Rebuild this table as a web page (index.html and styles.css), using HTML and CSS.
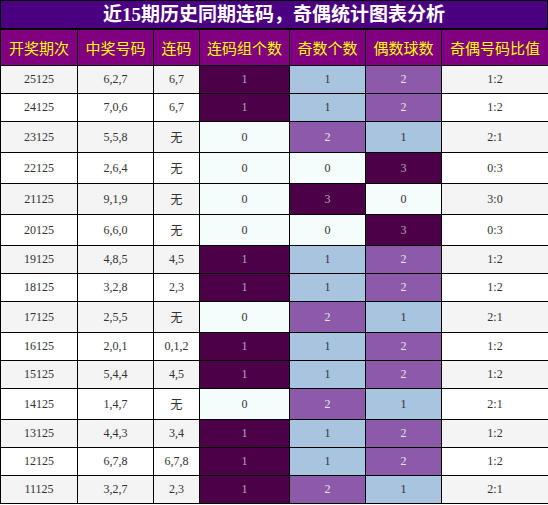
FILE: index.html
```html
<!DOCTYPE html>
<html lang="zh-CN">
<head>
  <meta charset="UTF-8" />
  <meta name="viewport" content="width=device-width, initial-scale=1.0"/>
  <title>连码奇偶统计</title>
  <link rel="stylesheet" href="styles.css">
</head>
<body>

  <div class="wrap">
    <div class="title">近15期历史同期连码，奇偶统计图表分析</div>

    <table class="stats">
      <colgroup>
        <col class="c-issue">
        <col class="c-nums">
        <col class="c-link">
        <col class="c-group">
        <col class="c-odd">
        <col class="c-even">
        <col class="c-ratio">
      </colgroup>
      <thead>
        <tr>
          <th>开奖期次</th>
          <th>中奖号码</th>
          <th>连码</th>
          <th>连码组个数</th>
          <th>奇数个数</th>
          <th>偶数球数</th>
          <th>奇偶号码比值</th>
        </tr>
      </thead>
      <tbody>
        <tr><td>25125</td><td>6,2,7</td><td>6,7</td><td class="lv3">1</td><td class="lv1">1</td><td class="lv2">2</td><td>1:2</td></tr>
        <tr><td>24125</td><td>7,0,6</td><td>6,7</td><td class="lv3">1</td><td class="lv1">1</td><td class="lv2">2</td><td>1:2</td></tr>
        <tr><td>23125</td><td>5,5,8</td><td>无</td><td class="lv0">0</td><td class="lv2">2</td><td class="lv1">1</td><td>2:1</td></tr>
        <tr><td>22125</td><td>2,6,4</td><td>无</td><td class="lv0">0</td><td class="lv0">0</td><td class="lv3">3</td><td>0:3</td></tr>
        <tr><td>21125</td><td>9,1,9</td><td>无</td><td class="lv0">0</td><td class="lv3">3</td><td class="lv0">0</td><td>3:0</td></tr>
        <tr><td>20125</td><td>6,6,0</td><td>无</td><td class="lv0">0</td><td class="lv0">0</td><td class="lv3">3</td><td>0:3</td></tr>
        <tr><td>19125</td><td>4,8,5</td><td>4,5</td><td class="lv3">1</td><td class="lv1">1</td><td class="lv2">2</td><td>1:2</td></tr>
        <tr><td>18125</td><td>3,2,8</td><td>2,3</td><td class="lv3">1</td><td class="lv1">1</td><td class="lv2">2</td><td>1:2</td></tr>
        <tr><td>17125</td><td>2,5,5</td><td>无</td><td class="lv0">0</td><td class="lv2">2</td><td class="lv1">1</td><td>2:1</td></tr>
        <tr><td>16125</td><td>2,0,1</td><td>0,1,2</td><td class="lv3">1</td><td class="lv1">1</td><td class="lv2">2</td><td>1:2</td></tr>
        <tr><td>15125</td><td>5,4,4</td><td>4,5</td><td class="lv3">1</td><td class="lv1">1</td><td class="lv2">2</td><td>1:2</td></tr>
        <tr><td>14125</td><td>1,4,7</td><td>无</td><td class="lv0">0</td><td class="lv2">2</td><td class="lv1">1</td><td>2:1</td></tr>
        <tr><td>13125</td><td>4,4,3</td><td>3,4</td><td class="lv3">1</td><td class="lv1">1</td><td class="lv2">2</td><td>1:2</td></tr>
        <tr><td>12125</td><td>6,7,8</td><td>6,7,8</td><td class="lv3">1</td><td class="lv1">1</td><td class="lv2">2</td><td>1:2</td></tr>
        <tr><td>11125</td><td>3,2,7</td><td>2,3</td><td class="lv3">1</td><td class="lv2">2</td><td class="lv1">1</td><td>2:1</td></tr>
      </tbody>
    </table>
  </div>

</body>
</html>
```

FILE: styles.css
```css
* { box-sizing: border-box; }
body {
  margin: 0;
  padding: 0;
  background: #fff;
  font-family: 'Liberation Serif', 'Noto Sans CJK SC', serif;
}
.wrap {
  width: 548px;
}
.title {
  background: #4b0082;
  color: #fff;
  border: 1px solid #000;
  font-size: 19px;
  font-weight: bold;
  text-align: center;
  line-height: 27px;
  height: 29px;
}
.stats {
  width: 548px;
  border-collapse: collapse;
  table-layout: fixed;
  border: 1px solid #000;
}
.c-issue { width: 77px; }
.c-nums { width: 76px; }
.c-link { width: 46px; }
.c-group { width: 90px; }
.c-odd { width: 76px; }
.c-even { width: 76px; }
.c-ratio { width: 107px; }
.stats th {
  background: #800080;
  color: #ffff00;
  font-family: 'Noto Sans CJK SC', sans-serif;
  font-weight: normal;
  font-size: 15px;
  height: 36px;
  padding: 0;
  border: 1px solid #000;
  text-align: center;
  white-space: nowrap;
}
.stats td {
  font-size: 12px;
  color: #333;
  text-align: center;
  padding: 6px 0;
  border: 1px solid #000;
  height: 28px;
}
.stats tbody tr:nth-child(odd) { background: #f4f4f4; }
.stats tbody tr:nth-child(even) { background: #fff; }
.lv0 { background: #f5fcfc; }
.lv1 { background: #a8c4df; }
.stats td.lv2 { background: #8c5aa9; color: #e4e4e4; }
.stats td.lv3 { background: #4b0048; color: #b8a8b8; }
```
